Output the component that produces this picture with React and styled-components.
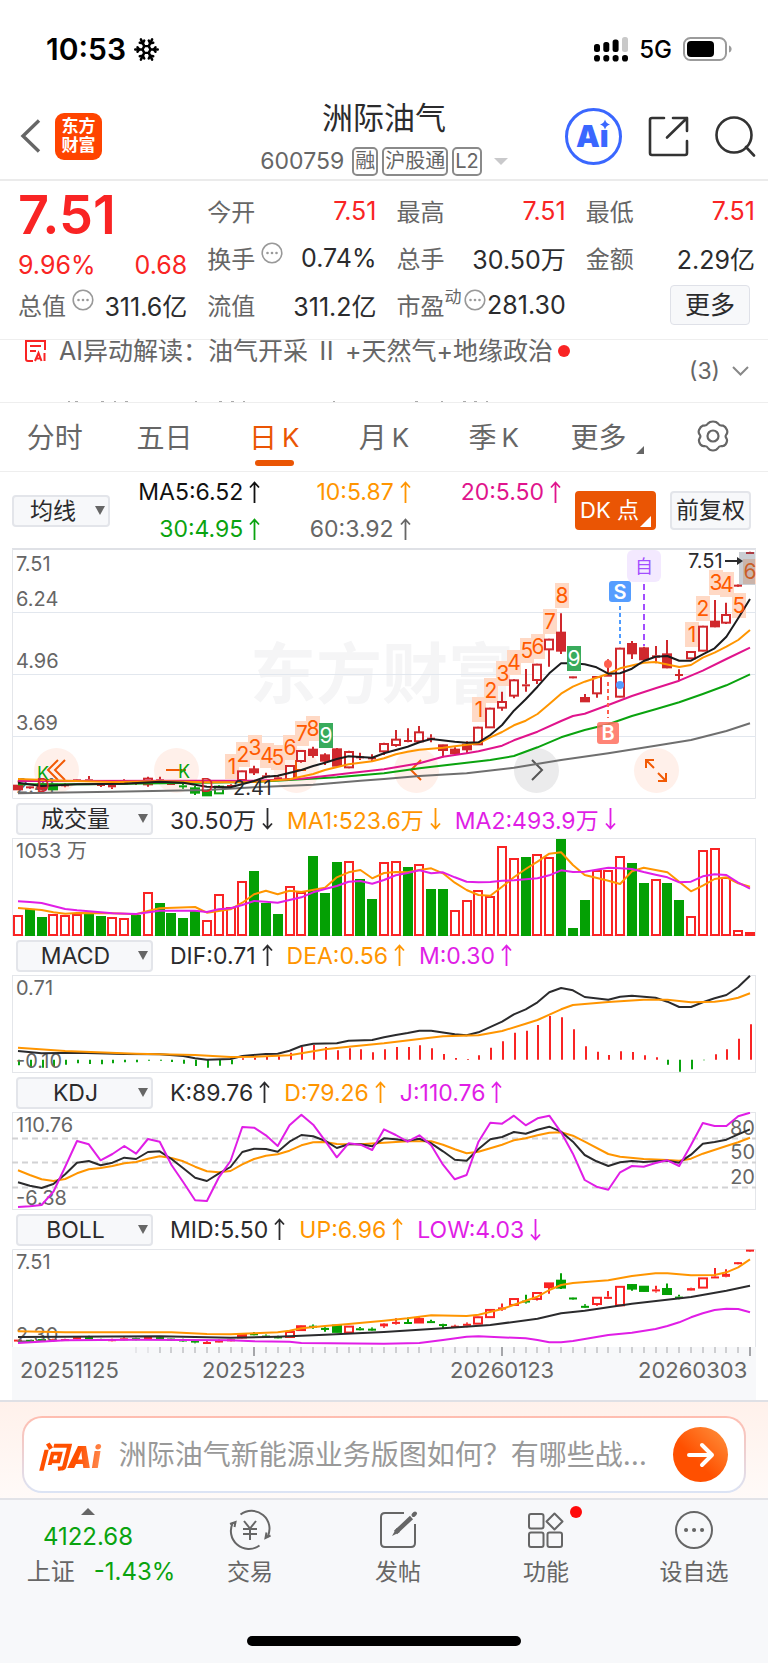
import React from "react";
import styled, { createGlobalStyle } from "styled-components";
import { Snowflake } from "lucide-react";

const RED = "#f92424";
const ORANGE = "#ea5504";
const AMBER = "#ff9500";
const GREEN = "#0aa30f";
const PINK = "#e0148c";
const VIOLET = "#e01ee6";
const INK = "#2b2b2d";
const GRAY = "#666";
const PALE = "#f7f8fa";
const LINE = "#e4e6ea";

const GlobalStyle = createGlobalStyle`
  * { box-sizing: border-box; }
  body {
    margin: 0;
    background: #fff;
    color: ${INK};
    font-family: Inter, "Noto Sans CJK SC", sans-serif;
  }
  button, select, input { font-family: inherit; color: inherit; margin: 0; }
  button { padding: 0; border: 0; background: none; }
  svg { display: block; flex: none; }
`;

/* ---------- chart data ---------- */

// [high, top, bottom, low] for each day, in thirds of a pixel from the page grid
const CANDLES = [
  [736, 737, 748, 749], [738, 739, 745, 747], [730, 733, 745, 750], [731, 734, 748, 749],
  [730, 733, 739, 742], [717, 718, 722, 723], [708, 718, 722, 723], [730, 732, 738, 741],
  [731, 734, 742, 747], [718, 727, 730, 733], [722, 726, 731, 735], [710, 716, 733, 740],
  [710, 718, 722, 723], [726, 729, 733, 734], [730, 736, 740, 746], [738, 745, 758, 765],
  [750, 756, 766, 768], [736, 740, 760, 762], [733, 735, 740, 741], [692, 694, 720, 726],
  [677, 688, 697, 705], [698, 706, 711, 715], [708, 712, 717, 720], [675, 678, 717, 720],
  [630, 633, 663, 668], [620, 629, 645, 653], [640, 646, 662, 675], [624, 628, 677, 680],
  [632, 636, 682, 685], [638, 649, 654, 660], [643, 652, 657, 664], [608, 612, 634, 645],
  [570, 599, 615, 620], [565, 600, 603, 607], [558, 577, 604, 607], [583, 593, 600, 607],
  [614, 616, 630, 652], [622, 629, 640, 645], [604, 614, 628, 640], [560, 563, 613, 615],
  [503, 506, 562, 564], [455, 486, 503, 512], [418, 421, 467, 475], [387, 433, 438, 455],
  [371, 374, 420, 432], [296, 299, 328, 380], [220, 278, 332, 342], [408, 409, 412, 413],
  [462, 474, 484, 485], [408, 411, 460, 473], [358, 404, 408, 410], [323, 326, 470, 472],
  [303, 312, 340, 357], [320, 325, 358, 362], [318, 346, 353, 370], [300, 343, 382, 385],
  [388, 402, 405, 423], [333, 336, 355, 357], [257, 260, 332, 334], [180, 245, 259, 262],
  [188, 225, 248, 252], [133, 134, 137, 138], [35, 36, 39, 40],
];

// top edge of every volume bar, and whether the day closed lower
const VOLUME = [
  346, 328, 350, 341, 345, 341, 341, 348, 350, 353, 345, 275, 309, 340, 353, 334,
  361, 282, 320, 243, 213, 309, 342, 258, 275, 168, 279, 185, 183, 237, 297, 187,
  184, 200, 193, 267, 267, 330, 299, 270, 288, 139, 174, 172, 163, 172, 117, 383,
  300, 209, 209, 169, 188, 250, 238, 248, 300, 348, 149, 143, 232, 390, 396,
];
const DOWN = new Set([
  1, 2, 6, 7, 10, 12, 13, 14, 15, 20, 21, 22, 25, 26, 27, 29, 30, 33, 35, 36, 43,
  46, 47, 48, 52, 53, 55, 56,
]);
const DULL = new Set([3, 14, 15, 16, 17]);

const MA = [
  ["#6f6f6f", [[0, 760], [8, 755], [16, 750], [20, 742], [25, 734], [29, 722], [31, 717], [34, 708], [38, 700], [42, 683], [46, 660], [50, 640], [54, 617], [57, 600], [60, 573], [62, 550]]],
  [GREEN, [[0, 733], [6, 733], [20, 726], [27, 712], [31, 700], [34, 685], [38, 668], [40, 660], [42, 648], [44, 622], [46, 592], [48, 570], [50, 553], [52, 528], [54, 508], [56, 487], [58, 462], [60, 436], [62, 403]]],
  [PINK, [[0, 723], [16, 722], [20, 722], [24, 716], [28, 700], [31, 688], [34, 670], [36, 650], [38, 640], [39, 634], [41, 617], [42, 601], [44, 575], [46, 543], [47, 528], [48, 521], [50, 495], [52, 468], [54, 445], [56, 422], [58, 392], [60, 357], [62, 323]]],
  [AMBER, [[0, 717], [4, 722], [8, 726], [12, 724], [16, 727], [20, 726], [23, 718], [25, 702], [26, 690], [28, 673], [30, 664], [31, 655], [32, 643], [33, 635], [34, 629], [36, 623], [39, 610], [40, 592], [41, 576], [42, 556], [43, 542], [44, 522], [45, 492], [46, 461], [47, 440], [48, 425], [50, 401], [51, 385], [53, 368], [54, 366], [56, 381], [57, 375], [58, 353], [59, 338], [60, 320], [61, 300], [62, 270]]],
  ["#1c1c1e", [[0, 728], [2, 738], [5, 733], [9, 731], [12, 725], [14, 728], [16, 740], [18, 742], [20, 723], [21, 710], [22, 707], [24, 690], [25, 678], [26, 668], [27, 657], [28, 649], [30, 653], [31, 640], [32, 630], [33, 620], [34, 607], [35, 597], [37, 605], [38, 608], [39, 607], [40, 585], [41, 555], [42, 512], [43, 478], [44, 440], [45, 400], [46, 370], [47, 370], [48, 373], [49, 382], [50, 401], [51, 400], [52, 386], [53, 363], [54, 350], [55, 348], [56, 362], [57, 362], [58, 343], [59, 325], [60, 290], [61, 235], [62, 177]]],
];

const VOLUME_MA = [
  [AMBER, [[0, 324], [1, 327], [2, 330], [3, 337], [4, 341], [5, 339], [8, 340], [10, 343], [11, 333], [12, 325], [15, 321], [16, 338], [17, 333], [18, 328], [19, 308], [20, 283], [21, 272], [22, 283], [23, 272], [24, 276], [26, 263], [27, 232], [28, 217], [29, 210], [30, 235], [31, 219], [32, 216], [33, 217], [34, 210], [35, 205], [36, 220], [37, 248], [38, 270], [39, 285], [40, 287], [41, 260], [42, 232], [43, 207], [44, 185], [45, 161], [46, 157], [47, 195], [48, 225], [50, 242], [51, 252], [52, 214], [53, 203], [55, 217], [56, 245], [57, 274], [58, 257], [59, 237], [60, 232], [61, 250], [62, 260]]],
  [VIOLET, [[0, 304], [1, 306], [2, 309], [3, 318], [4, 327], [5, 331], [8, 340], [10, 342], [12, 332], [15, 332], [16, 336], [17, 328], [18, 325], [19, 315], [20, 303], [21, 305], [22, 308], [23, 300], [24, 292], [25, 277], [26, 267], [27, 258], [28, 245], [29, 243], [30, 251], [31, 240], [32, 226], [33, 219], [34, 211], [35, 220], [36, 217], [37, 232], [38, 245], [39, 247], [40, 246], [41, 242], [42, 241], [43, 238], [44, 235], [45, 226], [46, 211], [47, 216], [48, 215], [49, 209], [50, 203], [51, 205], [52, 207], [53, 216], [54, 224], [55, 232], [56, 247], [57, 245], [58, 229], [59, 223], [60, 225], [61, 248], [62, 266]]],
];

const MACD_BARS = [
  796, 803, 803, 800, 794, 790, 792, 793, 790, 787, 787, 782, 782, 786, 791, 798,
  803, 797, 793, 775, 773, 770, 769, 758, 740, 735, 741, 751, 745, 748, 757, 748,
  741, 741, 736, 745, 762, 774, 777, 766, 743, 724, 698, 692, 675, 648, 652, 688,
  739, 755, 765, 754, 756, 766, 772, 794, 815, 808, 781, 763, 748, 716, 673,
];
const MACD_LINES = [
  [INK, [[0, 753], [2, 760], [5, 758], [9, 762], [12, 763], [14, 768], [15, 775], [16, 779], [18, 777], [19, 768], [21, 762], [22, 761], [23, 752], [24, 738], [25, 731], [27, 730], [28, 722], [30, 720], [31, 712], [32, 705], [33, 699], [34, 692], [35, 692], [37, 703], [38, 706], [39, 697], [41, 665], [42, 643], [43, 628], [44, 607], [45, 577], [46, 564], [47, 571], [48, 591], [50, 599], [51, 590], [52, 587], [54, 593], [55, 605], [56, 621], [57, 621], [58, 607], [59, 595], [60, 585], [61, 561], [62, 527]]],
  [AMBER, [[0, 743], [4, 753], [10, 761], [15, 765], [18, 771], [20, 770], [23, 766], [24, 760], [26, 748], [28, 740], [31, 730], [34, 717], [36, 709], [39, 706], [41, 693], [43, 671], [44, 660], [46, 628], [47, 615], [50, 606], [53, 599], [55, 599], [57, 607], [59, 605], [60, 601], [61, 593], [62, 580]]],
];

const daily = (values) => values.map((v, i) => [i, v]);
const KDJ_LINES = [
  [AMBER, [[0, 286], [1, 300], [2, 313], [3, 318], [4, 312], [5, 295], [6, 283], [7, 279], [8, 273], [9, 265], [10, 261], [11, 251], [12, 244], [13, 249], [14, 259], [15, 275], [16, 289], [17, 292], [18, 288], [19, 268], [20, 252], [21, 242], [22, 238], [23, 227], [24, 211], [25, 202], [26, 201], [27, 207], [29, 208], [31, 203], [33, 199], [35, 199], [36, 209], [37, 223], [38, 235], [39, 230], [41, 209], [42, 196], [43, 190], [44, 181], [45, 173], [46, 172], [47, 182], [48, 200], [50, 237], [51, 245], [53, 252], [55, 255], [56, 257], [57, 251], [58, 236], [60, 213], [61, 202], [62, 188]]],
  [INK, daily([322, 332, 339, 327, 298, 263, 258, 271, 263, 248, 252, 231, 229, 252, 280, 308, 318, 296, 276, 231, 221, 222, 230, 200, 180, 184, 197, 219, 208, 208, 214, 190, 193, 197, 191, 205, 229, 254, 257, 222, 193, 186, 171, 176, 164, 155, 170, 200, 240, 259, 273, 262, 258, 261, 259, 257, 263, 239, 206, 201, 194, 178, 163])],
  [VIOLET, daily([396, 394, 390, 350, 275, 198, 208, 256, 237, 213, 236, 192, 200, 270, 322, 376, 378, 308, 258, 156, 158, 181, 213, 151, 119, 149, 197, 247, 205, 209, 225, 163, 180, 200, 181, 211, 269, 313, 300, 200, 143, 146, 122, 151, 130, 122, 172, 236, 315, 335, 344, 292, 273, 275, 264, 256, 273, 210, 144, 153, 153, 124, 113])],
];

const BOLL_LINES = [
  [AMBER, [[0, 769], [4, 772], [13, 772], [16, 777], [18, 778], [20, 775], [22, 772], [23, 767], [24, 760], [26, 753], [28, 747], [31, 737], [33, 730], [35, 721], [38, 723], [39, 719], [41, 702], [43, 677], [44, 665], [45, 645], [46, 630], [47, 624], [50, 616], [52, 603], [54, 595], [55, 595], [57, 601], [59, 600], [60, 592], [61, 577], [62, 553]]],
  [INK, [[0, 786], [12, 784], [18, 788], [22, 785], [26, 779], [31, 771], [36, 760], [40, 750], [44, 731], [46, 715], [48, 707], [52, 686], [57, 666], [60, 647], [62, 632]]],
  [VIOLET, [[0, 804], [4, 796], [10, 794], [18, 796], [20, 799], [23, 800], [24, 804], [31, 806], [34, 804], [36, 795], [38, 785], [39, 784], [43, 790], [44, 795], [45, 802], [46, 802], [47, 798], [50, 780], [52, 773], [54, 762], [55, 753], [56, 742], [57, 727], [58, 715], [59, 705], [60, 701], [61, 702], [62, 712]]],
];

// nine-count markers: label, x and y of the centre
const COUNTS = [
  ["1", 220, 218], ["2", 231, 206], ["3", 243, 199], ["4", 255, 207], ["5", 266, 209],
  ["6", 278, 199], ["7", 290, 185], ["8", 301, 180], ["9", 314, 187],
  ["1", 467, 161], ["2", 479, 142], ["3", 491, 125], ["4", 502, 114], ["5", 515, 102],
  ["6", 526, 98], ["7", 538, 73], ["8", 550, 47], ["9", 562, 110],
  ["1", 680, 86], ["2", 691, 60], ["3", 704, 34], ["4", 715, 36], ["5", 727, 57], ["6", 738, 23],
];

/* ---------- chart pieces ---------- */

const dayX = (i) => 6 + (i * 732) / 62;
const scaleFrom = (origin) => (v) => (v - origin) / 3;

const PlotSvg = styled.svg`
  width: 100%;
  height: auto;
  position: relative;
  pointer-events: none;
`;
const Scale = styled.text`
  font-size: 20px;
  fill: ${(p) => p.$color || GRAY};
`;
const Count = styled.text`
  font-size: 21px;
  text-anchor: middle;
  fill: ${(p) => (p.$last ? "#fff" : "#ff5a00")};
`;
const PointMark = styled.text`
  font-size: ${(p) => p.$size || 18}px;
  font-weight: ${(p) => p.$weight || 400};
  text-anchor: middle;
  fill: ${(p) => p.$color};
`;
const Watermark = styled.text`
  font-size: 66px;
  font-weight: 700;
  fill: #f5f5f6;
`;

function Frame({ height }) {
  return <rect x="0.5" y="0.5" width="743" height={height - 1} fill="none" stroke={LINE} />;
}

function Lines({ series, y }) {
  return series.map(([color, points]) => (
    <polyline
      key={color}
      fill="none"
      stroke={color}
      strokeWidth="2"
      strokeLinejoin="round"
      points={points.map(([i, v]) => `${dayX(i).toFixed(1)},${y(v).toFixed(1)}`).join(" ")}
    />
  ));
}

function Candles({ y, color, filled, half }) {
  return CANDLES.map(([h, t, b, l], i) => {
    const x = Math.round(dayX(i));
    const c = color(i);
    const top = y(t);
    const height = Math.max(2, y(b) - top);
    return (
      <g key={i} stroke={c} strokeWidth="2">
        <path d={`M${x} ${y(h)}V${top}M${x} ${top + height}V${y(l)}`} />
        <rect
          x={x - half}
          y={top}
          width={half * 2}
          height={height}
          strokeWidth={height < 3 ? 0 : 2}
          fill={height < 5 || filled(i) ? c : "#fff"}
        />
      </g>
    );
  });
}

function PriceChart() {
  const y = scaleFrom(24);
  return (
    <PlotSvg viewBox="0 0 744 251" role="img" aria-label="日K 价格走势">
      <Watermark x="238" y="150">东方财富</Watermark>
      <path d="M0 1H744" stroke="#dfe1e6" strokeWidth="2" />
      <path d="M0.5 1V250.5H743.5V1" fill="none" stroke={LINE} />
      <path d="M0 64.5H744M0 126.5H744M0 188.5H744" stroke="#e2e7ee" />
      <Scale x="4" y="23">7.51</Scale>
      <Scale x="4" y="58">6.24</Scale>
      <Scale x="4" y="120">4.96</Scale>
      <Scale x="4" y="182">3.69</Scale>
      <Scale x="4" y="245">2.41</Scale>
      {COUNTS.map(([n, x, cy], i) => (
        <rect
          key={i}
          x={x - 7}
          y={cy - 12}
          width="14"
          height="25"
          fill={n === "9" ? "#39ab5c" : "#ffd9c5"}
        />
      ))}
      <Candles
        y={y}
        half={4}
        color={(i) => (DULL.has(i) ? GREEN : "#d0282d")}
        filled={(i) => DOWN.has(i)}
      />
      <Lines series={MA} y={y} />
      {COUNTS.filter(([n]) => n === "9").map(([n, x, cy]) => (
        <rect key={x} x={x - 7} y={cy - 12} width="14" height="25" fill="#39ab5c" />
      ))}
      {COUNTS.map(([n, x, cy], i) => (
        <Count key={i} x={x} y={cy + 8} $last={n === "9"}>{n}</Count>
      ))}
      <PointMark x="31" y="232" $color={GREEN}>K</PointMark>
      <PointMark x="31" y="244" $color="#d0282d">D</PointMark>
      <PointMark x="172" y="230" $color={GREEN}>K</PointMark>
      <PointMark x="195" y="244" $color="#d0282d">D</PointMark>
      <Scale x="221" y="247" $color={INK}>2.41</Scale>

      <rect x="727" y="4" width="16" height="33" fill="#5b6675" opacity="0.32" />
      <Scale x="676" y="20" $color={INK}>7.51</Scale>
      <path d="M713 13H726" stroke={INK} strokeWidth="2" />
      <path d="M725 9L731 13L725 17Z" fill={INK} />

      <rect x="615" y="2" width="34" height="32" rx="6" fill="#f3e9ff" />
      <PointMark x="632" y="25" $color="#a24dff">自</PointMark>
      <path d="M632 36V98" stroke="#a24dff" strokeWidth="2" strokeDasharray="6 4" />
      <rect x="597" y="33" width="22" height="21" rx="3" fill="#559dff" />
      <PointMark x="608" y="51" $size={20} $weight={600} $color="#fff">S</PointMark>
      <path d="M608 58V96" stroke="#4d9bff" strokeWidth="2" strokeDasharray="4 3" />
      <circle cx="608" cy="137" r="4" fill="#559dff" />
      <rect x="585" y="174" width="22" height="22" rx="3" fill="#ff6f5e" opacity="0.85" />
      <PointMark x="596" y="192" $size={20} $weight={600} $color="#fff">B</PointMark>
      <path d="M596 134V170" stroke="#ff5f4d" strokeWidth="2" strokeDasharray="4 3" />
      <circle cx="596" cy="116" r="4" fill="#ff5f4d" />
    </PlotSvg>
  );
}

function VolumeChart() {
  const y = scaleFrom(114);
  return (
    <PlotSvg viewBox="0 0 744 98" role="img" aria-label="成交量走势">
      <Frame height={98} />
      <Scale x="4" y="20">1053 万</Scale>
      {VOLUME.map((v, i) => {
        const down = DOWN.has(i);
        const inset = down ? 0 : 1;
        const top = Math.round(y(v));
        return (
          <rect
            key={i}
            x={Math.round(dayX(i)) - 5 + inset}
            y={top + inset}
            width={10 - inset * 2}
            height={Math.max(1, 98 - top - inset * 2)}
            fill={down ? "#04a004" : "#fff"}
            stroke={down ? "none" : RED}
            strokeWidth="2"
          />
        );
      })}
      <Lines series={VOLUME_MA} y={y} />
    </PlotSvg>
  );
}

function MacdChart() {
  const y = scaleFrom(525);
  return (
    <PlotSvg viewBox="0 0 744 98" role="img" aria-label="MACD 走势">
      <Frame height={98} />
      <Scale x="4" y="20">0.71</Scale>
      {MACD_BARS.map((v, i) => (
        <path
          key={i}
          d={`M${Math.round(dayX(i)) + 1} ${y(779)}V${y(v)}`}
          stroke={v > 779 ? GREEN : RED}
          strokeWidth="2"
        />
      ))}
      <Scale x="4" y="93">-0.10</Scale>
      <Lines series={MACD_LINES} y={y} />
    </PlotSvg>
  );
}

function KdjChart() {
  return (
    <PlotSvg viewBox="0 0 744 98" role="img" aria-label="KDJ 走势">
      <Frame height={98} />
      <path d="M0 26.5H744M0 50.5H744M0 75.5H744" stroke="#d2d2d4" strokeWidth="2" strokeDasharray="6 4" />
      <Scale x="4" y="20">110.76</Scale>
      <Scale x="4" y="93">-6.38</Scale>
      <Scale x="743" y="23" textAnchor="end">80</Scale>
      <Scale x="743" y="47" textAnchor="end">50</Scale>
      <Scale x="743" y="72" textAnchor="end">20</Scale>
      <Lines series={KDJ_LINES} y={scaleFrom(111)} />
    </PlotSvg>
  );
}

function BollChart() {
  const y = scaleFrom(522);
  return (
    <PlotSvg viewBox="0 0 744 98" role="img" aria-label="BOLL 走势">
      <path d="M0.5 98V0.5H743.5V98" fill="none" stroke={LINE} />
      <Scale x="4" y="20">7.51</Scale>
      <Candles
        y={(v) => y(510 + v * 0.385)}
        half={4}
        color={(i) => (DOWN.has(i) ? "#04a004" : RED)}
        filled={(i) => DOWN.has(i)}
      />
      <Scale x="4" y="93">2.30</Scale>
      <Lines series={BOLL_LINES} y={y} />
    </PlotSvg>
  );
}

const AXIS_DAYS = Array.from({ length: 53 }, (_, k) => k + 10);
const AXIS_MONTHS = [20, 41, 62];

const AxisSvg = styled(PlotSvg)`
  background: ${PALE};
`;
const AxisDate = styled.text`
  font-size: 22px;
  fill: ${GRAY};
`;

function DateAxis() {
  return (
    <AxisSvg viewBox="0 0 744 53" role="img" aria-label="日期">
      {AXIS_DAYS.map((i) => (
        <path
          key={i}
          d={`M${Math.round(dayX(i))} 0V${AXIS_MONTHS.includes(i) ? 9 : 6}`}
          stroke="#a5a6aa"
          strokeWidth={AXIS_MONTHS.includes(i) ? 2 : 1}
          opacity={i < 12 ? 0.4 : 1}
        />
      ))}
      <AxisDate x="8" y="31">20251125</AxisDate>
      <AxisDate x="190" y="31">20251223</AxisDate>
      <AxisDate x="438" y="31">20260123</AxisDate>
      <AxisDate x="626" y="31">20260303</AxisDate>
    </AxisSvg>
  );
}

/* ---------- status bar and header ---------- */

const StatusBar = styled.div`
  display: flex;
  align-items: center;
  justify-content: space-between;
  height: 95px;
  padding: 3px 36px 0 46px;
  color: #000;
`;
const StatusGroup = styled.div`
  display: flex;
  align-items: center;
  gap: ${(p) => p.$gap}px;
  font-size: ${(p) => p.$size}px;
  font-weight: ${(p) => p.$weight};
`;

function Signal() {
  return (
    <svg width="34" height="25" viewBox="0 0 34 25">
      <rect x="0" y="7" width="6" height="8" rx="2.5" />
      <rect x="9.3" y="5" width="6" height="10" rx="2.5" />
      <rect x="18.6" y="2.5" width="6" height="12.5" rx="2.5" />
      <rect x="28" y="0" width="6" height="15" rx="2.5" fill="#c9c9c9" />
      {[0, 9.3, 18.6, 28].map((x) => (
        <rect key={x} x={x} y="18" width="6" height="6.5" rx="2.8" />
      ))}
    </svg>
  );
}

function Battery() {
  return (
    <svg width="49" height="24" viewBox="0 0 49 24">
      <rect x="1" y="1" width="42" height="22" rx="6.5" fill="none" stroke="#9b9b9b" strokeWidth="2" />
      <rect x="4" y="4" width="27" height="16" rx="4" />
      <path d="M46 8.5C49.5 9.5 49.5 14.5 46 15.5Z" fill="#9b9b9b" />
    </svg>
  );
}

const Header = styled.header`
  display: grid;
  grid-template-columns: 1fr auto 1fr;
  align-items: center;
  height: 86px;
  padding: 0 12px 2px;
  border-bottom: 2px solid #ebebeb;
`;
const HeaderSide = styled.div`
  display: flex;
  align-items: center;
  justify-content: ${(p) => (p.$end ? "flex-end" : "flex-start")};
  gap: ${(p) => (p.$end ? 26 : 14)}px;
  padding-left: 8px;
`;
const AppLogo = styled.span`
  display: grid;
  place-content: center;
  width: 47px;
  height: 47px;
  border-radius: 9px;
  background: #ff4400;
  color: #fff;
  font-size: 17px;
  font-weight: 700;
  line-height: 19px;
  text-align: center;
`;
const Title = styled.h1`
  margin: 0;
  font-size: 31px;
  font-weight: 400;
  line-height: 42px;
  text-align: center;
`;
const Subtitle = styled.div`
  display: flex;
  align-items: center;
  justify-content: center;
  gap: 4px;
  height: 36px;
  padding-top: 8px;
  font-size: 23px;
  color: ${GRAY};
`;
const Code = styled.span`
  margin-right: 4px;
`;
const Tag = styled.span`
  height: 29px;
  padding: 0 1px;
  border: 2px solid #8a8a8a;
  border-radius: 5px;
  font-size: 20px;
  line-height: 25px;
`;
const Caret = styled.span`
  margin-left: 8px;
  border: 7px solid transparent;
  border-top-color: #c9c9cb;
  border-bottom: 0;
`;
const AiText = styled.text`
  font-size: 30px;
  font-weight: 900;
  fill: #3a67ff;
`;

function BackIcon() {
  return (
    <svg width="21" height="34" viewBox="0 0 21 34" fill="none" stroke="#666" strokeWidth="3.4">
      <path d="M19 1.5L3 17L19 32.5" />
    </svg>
  );
}

function AiIcon() {
  return (
    <svg width="57" height="57" viewBox="0 0 57 57">
      <circle cx="28.5" cy="28.5" r="27" fill="none" stroke="#3a67ff" strokeWidth="3" />
      <AiText x="11" y="39">Aı</AiText>
      <path d="M40 11.5Q41 15.5 45 16.5Q41 17.5 40 21.5Q39 17.5 35 16.5Q39 15.5 40 11.5Z" fill="#3a67ff" />
    </svg>
  );
}

function ShareIcon() {
  return (
    <svg width="41" height="41" viewBox="0 0 41 41" fill="none" stroke="#333" strokeWidth="2.6" strokeLinecap="round" strokeLinejoin="round">
      <path d="M16 2H4Q2 2 2 4V37Q2 39 4 39H37Q39 39 39 37V25" />
      <path d="M25 2H39V15M39 2L19 21.5" />
    </svg>
  );
}

function SearchIcon() {
  return (
    <svg width="41" height="41" viewBox="0 0 41 41" fill="none" stroke="#333" strokeWidth="2.6" strokeLinecap="round">
      <circle cx="19" cy="19" r="17.5" />
      <path d="M31 31L39 39.5" />
    </svg>
  );
}

/* ---------- quote ---------- */

const Quote = styled.section`
  display: grid;
  grid-template-columns: repeat(4, 1fr);
  column-gap: 20px;
  padding: 6px 13px 11px 18px;
`;
const QuoteColumn = styled.div`
  display: grid;
  grid-template-rows: 47px 47px 47px;
`;
const Price = styled.strong`
  align-self: center;
  padding-top: 8px;
  font-size: 54px;
  font-weight: 600;
  line-height: 48px;
  color: ${RED};
`;
const Figure = styled.div`
  display: flex;
  align-items: center;
  justify-content: ${(p) => (p.$change ? "space-between" : "flex-start")};
  padding-top: ${(p) => (p.$change ? 14 : 0)}px;
  white-space: nowrap;
  font-size: 25px;
`;
const Label = styled.span`
  font-size: 24px;
  color: ${GRAY};
`;
const Super = styled.sup`
  align-self: flex-start;
  font-size: 17px;
  line-height: 32px;
  color: ${GRAY};
`;
const Value = styled.span`
  color: ${(p) => (p.$up ? RED : INK)};
  ${Label} ~ & { margin-left: auto; }
`;
const MoreButton = styled.button`
  justify-self: end;
  align-self: center;
  width: 80px;
  height: 40px;
  margin-right: 5px;
  border: 1px solid #dfe1e8;
  border-radius: 4px;
  background: ${PALE};
  font-size: 25px;
  line-height: 36px;
`;
const InfoButton = styled.button`
  align-self: flex-start;
  margin: 8px 0 0 ${(p) => (p.$tight ? 2 : 6)}px;
`;

function Info({ tight, label }) {
  return (
    <InfoButton aria-label={label} $tight={tight}>
      <svg width="22" height="22" viewBox="0 0 22 22" fill="#999">
        <circle cx="11" cy="11" r="9.8" fill="none" stroke="#999" strokeWidth="1.6" />
        <circle cx="6.5" cy="11" r="1.3" />
        <circle cx="11" cy="11" r="1.3" />
        <circle cx="15.5" cy="11" r="1.3" />
      </svg>
    </InfoButton>
  );
}

/* ---------- news ---------- */

const News = styled.section`
  display: flex;
  justify-content: space-between;
  align-items: stretch;
  height: 64px;
  padding: 0 19px 0 25px;
  border-top: 1px solid #eee;
  border-bottom: 1px solid #eee;
  font-size: 25px;
  color: ${GRAY};
`;
const NewsText = styled.div`
  display: flex;
  flex-direction: column;
  justify-content: space-between;
`;
const Headline = styled.a`
  display: flex;
  align-items: center;
  height: 22px;
  color: inherit;
  text-decoration: none;
  white-space: nowrap;
`;
const HeadlineText = styled.span`
  margin: 0 5px 0 13px;
  padding-bottom: 4px;
`;
const Numeral = styled.span`
  margin: 0 6px;
  font-family: "Noto Sans CJK SC", sans-serif;
  line-height: 1;
`;
const Dot = styled.i`
  width: 12px;
  height: 12px;
  border-radius: 50%;
  background: ${RED};
`;
const NewsCount = styled.button`
  display: flex;
  align-items: center;
  gap: 12px;
  font-size: 23px;
  color: ${GRAY};
`;

/* ---------- period tabs ---------- */

const Tabs = styled.nav`
  display: flex;
  height: 69px;
  border-bottom: 1px solid #eee;
`;
const Tab = styled.button`
  flex: 1;
  display: flex;
  flex-direction: column;
  align-items: center;
  justify-content: flex-end;
  gap: 2px;
  padding-bottom: 5px;
  font-size: 28px;
  line-height: 40px;
  color: ${(p) => (p.$active ? ORANGE : GRAY)};
  &::after {
    content: "";
    width: 39px;
    height: 6px;
    border-radius: 3px;
    background: ${(p) => (p.$active ? ORANGE : "transparent")};
  }
`;
const TabName = styled.span`
  display: flex;
  align-items: flex-end;
  gap: ${(p) => (p.$menu ? 10 : 5)}px;
  height: 40px;
  padding-left: ${(p) => (p.$menu ? 8 : 0)}px;
`;
const Latin = styled.span`
  font-size: 26px;
`;
const Corner = styled.i`
  width: 0;
  height: 0;
  margin-bottom: ${(p) => p.$up || 0}px;
  border-left: ${(p) => p.$size}px solid transparent;
  border-bottom: ${(p) => p.$size}px solid ${(p) => p.$color};
`;

/* ---------- indicators ---------- */

const MaBar = styled.div`
  display: flex;
  align-items: center;
  gap: 14px;
  height: 76px;
  padding: 1px 17px 0 12px;
`;
const MaValues = styled.div`
  flex: 1;
  display: grid;
  grid-template-columns: repeat(3, 1fr);
  grid-auto-rows: 37px;
  margin-left: -14px;
`;
const Reading = styled.span`
  display: flex;
  align-items: center;
  justify-content: flex-end;
  gap: 6px;
  font-size: 23px;
  white-space: nowrap;
  color: ${(p) => p.$color};
`;
const PickerBox = styled.span`
  position: relative;
  flex: none;
  width: ${(p) => p.$width}px;
  &::after {
    content: "";
    position: absolute;
    right: 5px;
    top: 11px;
    border: 5px solid transparent;
    border-top: 9px solid #666;
    border-bottom: 0;
    pointer-events: none;
  }
`;
const Picker = styled.select`
  appearance: none;
  display: block;
  width: 100%;
  height: 32px;
  padding: 0 ${(p) => p.$pad}px 0 0;
  border: 2px solid #e3e5ea;
  border-radius: 4px;
  background: ${PALE};
  font-size: 23px;
  line-height: 28px;
  text-align: center;
  text-align-last: center;
`;
const PillButton = styled.button`
  display: flex;
  align-items: center;
  justify-content: center;
  position: relative;
  flex: none;
  width: 81px;
  height: 39px;
  border-radius: 4px;
  border: 2px solid ${(p) => (p.$hot ? ORANGE : "#e3e5ea")};
  background: ${(p) => (p.$hot ? ORANGE : PALE)};
  color: ${(p) => (p.$hot ? "#fff" : INK)};
  font-size: ${(p) => (p.$hot ? 22 : 23)}px;
  line-height: 32px;
  padding: 0 ${(p) => (p.$hot ? 12 : 0)}px 2px 0;
  white-space: nowrap;
`;
const PillCorner = styled(Corner)`
  position: absolute;
  right: 3px;
  bottom: 1px;
`;
const Charts = styled.main`
  padding: 0 12px;
`;
const IndicatorBar = styled.div`
  display: flex;
  align-items: center;
  gap: 14px;
  height: 39px;
  padding-left: 4px;
  ${Reading}:nth-child(2) { margin-left: 3px; }
`;
const PriceBox = styled.div`
  position: relative;
`;
const ChartControls = styled.div`
  position: absolute;
  left: 22px;
  bottom: 6px;
  display: flex;
  gap: 75px;
`;
const RoundButton = styled.button`
  display: grid;
  place-items: center;
  width: 45px;
  height: 45px;
  border-radius: 50%;
  background: ${(p) => (p.$muted ? "#ebebec" : "#fff0ea")};
  color: ${(p) => (p.$muted ? "#555" : "#f25a05")};
`;

function Arrow({ down }) {
  return (
    <svg width="11" height="23" viewBox="0 0 11 23" fill="none" stroke="currentColor" strokeWidth="1.8">
      <path d={down ? "M5.5 1V21M1 16.5L5.5 21.5L10 16.5" : "M5.5 22V2M1 6.5L5.5 1.5L10 6.5"} />
    </svg>
  );
}

function Reader({ color, down, children }) {
  return (
    <Reading $color={color}>
      {children}
      <Arrow down={down} />
    </Reading>
  );
}

function IndicatorPicker({ label, value, width, pad }) {
  return (
    <PickerBox $width={width}>
      <Picker aria-label={label} defaultValue={value} $pad={pad}>
        <option>{value}</option>
      </Picker>
    </PickerBox>
  );
}

const CONTROLS = [
  ["快退", "M24 12L14 22L24 32M31 12L21 22L31 32"],
  ["缩小", "M12 22H32"],
  ["放大", "M12 22H32M22 12V32"],
  ["左移", "M27 12L17 22L27 32"],
  ["右移", "M18 12L28 22L18 32"],
  ["全屏", "M12 20V12H20M12 12L20 20M32 25V33H24M32 33L24 25"],
];

const INDICATORS = [
  {
    name: "成交量",
    Chart: VolumeChart,
    readings: [["30.50万", INK, true], ["MA1:523.6万", AMBER, true], ["MA2:493.9万", VIOLET, true]],
  },
  {
    name: "MACD",
    Chart: MacdChart,
    readings: [["DIF:0.71", INK], ["DEA:0.56", AMBER], ["M:0.30", VIOLET]],
  },
  {
    name: "KDJ",
    Chart: KdjChart,
    readings: [["K:89.76", INK], ["D:79.26", AMBER], ["J:110.76", VIOLET]],
  },
  {
    name: "BOLL",
    Chart: BollChart,
    readings: [["MID:5.50", INK], ["UP:6.96", AMBER], ["LOW:4.03", VIOLET, true]],
  },
];

/* ---------- ask bar ---------- */

const AskBar = styled.div`
  padding: 14px 22px 5px;
  border-top: 2px solid #dfe0e5;
  background: linear-gradient(#fff1eb, #fffaf8);
`;
const AskBox = styled.form`
  display: flex;
  align-items: center;
  gap: 16px;
  height: 77px;
  padding: 0 16px 0 14px;
  border: 2px solid transparent;
  border-radius: 20px;
  background:
    linear-gradient(#fff, #fff) padding-box,
    linear-gradient(#ffbdb0, #dbe4f5) border-box;
`;
const AskLogo = styled.span`
  padding-right: 2px;
  font-size: 30px;
  font-style: italic;
  font-weight: 900;
  background: linear-gradient(100deg, #ff5000 60%, #ff9560);
  background-clip: text;
  color: transparent;
`;
const AskInput = styled.input`
  flex: 1;
  min-width: 0;
  padding: 0;
  border: 0;
  background: none;
  font-size: 28px;
  text-overflow: ellipsis;
  &::placeholder { color: #999; opacity: 1; }
`;
const SendButton = styled.button`
  display: grid;
  place-items: center;
  flex: none;
  width: 55px;
  height: 55px;
  border-radius: 50%;
  background: linear-gradient(225deg, #ff9440, #ff5000 60%);
`;

/* ---------- bottom navigation ---------- */

const BottomBar = styled.footer`
  border-top: 2px solid #e2e3e8;
  background: ${PALE};
`;
const NavRow = styled.nav`
  display: grid;
  grid-template-columns: 176fr repeat(4, 148fr);
`;
const NavItem = styled.button`
  display: flex;
  flex-direction: column;
  align-items: center;
  padding-top: 10px;
  gap: 8px;
  font-size: 23px;
  line-height: 28px;
  color: ${GRAY};
`;
const NavIcon = styled.span`
  position: relative;
`;
const Badge = styled.i`
  position: absolute;
  right: -16px;
  top: -4px;
  width: 12px;
  height: 12px;
  border-radius: 50%;
  background: #ff0a0a;
`;
const IndexItem = styled(NavItem)`
  gap: 7px;
  padding: 8px 0 0;
  color: ${GREEN};
  font-size: 24px;
  &::before {
    content: "";
    margin-bottom: 1px;
    border: 7px solid transparent;
    border-bottom: 7px solid #666;
    border-top: 0;
  }
`;
const IndexRow = styled.span`
  display: flex;
  gap: 19px;
  padding-left: 26px;
  white-space: nowrap;
`;
const HomeBar = styled.div`
  padding: 50px 0 17px;
  &::after {
    content: "";
    display: block;
    width: 274px;
    height: 10px;
    margin: 0 auto;
    border-radius: 5px;
    background: #000;
  }
`;

const NAV = [
  {
    name: "交易",
    icon: (
      <>
        <path d="M10.5 4.5A18 18 0 0 1 37.5 27M29.5 35.5A18 18 0 0 1 3 12.5" />
        <path d="M0 14L5.5 12L4.5 17M40.5 25.5L35.5 28L36.5 22.5" />
        <path d="M14 11L20 18.5L26 11M20 18.5V30M13 19H27M13 24H27" />
      </>
    ),
  },
  {
    name: "发帖",
    icon: (
      <>
        <path d="M26 3H7Q3 3 3 7V33Q3 37 7 37H33Q37 37 37 33V14" />
        <path d="M33.5 7.5L17.5 22.5" strokeWidth="4.5" />
        <path d="M18.5 18L14 26L22 22Z" fill="#666" stroke="none" />
        <path d="M35.5 5L37 3.5" strokeWidth="4" strokeLinecap="round" />
      </>
    ),
  },
  {
    name: "功能",
    badge: true,
    icon: (
      <>
        <rect x="3" y="4" width="14.5" height="14.5" rx="2" />
        <rect x="3" y="22.5" width="14.5" height="14.5" rx="2" />
        <rect x="21.5" y="22.5" width="14.5" height="14.5" rx="2" />
        <path d="M28.5 3.5L36.5 11.5L28.5 19.5L20.5 11.5Z" strokeLinejoin="round" />
      </>
    ),
  },
  {
    name: "设自选",
    icon: (
      <>
        <circle cx="20" cy="20" r="18" />
        <path d="M12 20H12.1M20 20H20.1M28 20H28.1" strokeWidth="4" strokeLinecap="round" />
      </>
    ),
  },
];

export default function App() {
  return (
    <>
      <GlobalStyle />
      <StatusBar>
        <StatusGroup $size={30} $weight={600} $gap={7}>
          10:53
          <Snowflake size={27} strokeWidth={2.2} />
        </StatusGroup>
        <StatusGroup $size={24} $weight={500} $gap={11}>
          <Signal />
          5G
          <Battery />
        </StatusGroup>
      </StatusBar>

      <Header>
        <HeaderSide>
          <button aria-label="返回"><BackIcon /></button>
          <AppLogo>东方<br />财富</AppLogo>
        </HeaderSide>
        <div>
          <Title>洲际油气</Title>
          <Subtitle>
            <Code>600759</Code>
            <Tag>融</Tag>
            <Tag>沪股通</Tag>
            <Tag>L2</Tag>
            <Caret />
          </Subtitle>
        </div>
        <HeaderSide $end>
          <button aria-label="AI"><AiIcon /></button>
          <button aria-label="分享"><ShareIcon /></button>
          <button aria-label="搜索"><SearchIcon /></button>
        </HeaderSide>
      </Header>

      <Quote>
        <QuoteColumn>
          <Price>7.51</Price>
          <Figure $change>
            <Value $up>9.96%</Value>
            <Value $up>0.68</Value>
          </Figure>
          <Figure>
            <Label>总值</Label>
            <Info label="总值说明" />
            <Value>311.6亿</Value>
          </Figure>
        </QuoteColumn>
        <QuoteColumn>
          <Figure><Label>今开</Label><Value $up>7.51</Value></Figure>
          <Figure>
            <Label>换手</Label>
            <Info label="换手说明" />
            <Value>0.74%</Value>
          </Figure>
          <Figure><Label>流值</Label><Value>311.2亿</Value></Figure>
        </QuoteColumn>
        <QuoteColumn>
          <Figure><Label>最高</Label><Value $up>7.51</Value></Figure>
          <Figure><Label>总手</Label><Value>30.50万</Value></Figure>
          <Figure>
            <Label>市盈</Label>
            <Super>动</Super>
            <Info tight label="市盈说明" />
            <Value>281.30</Value>
          </Figure>
        </QuoteColumn>
        <QuoteColumn>
          <Figure><Label>最低</Label><Value $up>7.51</Value></Figure>
          <Figure><Label>金额</Label><Value>2.29亿</Value></Figure>
          <MoreButton>更多</MoreButton>
        </QuoteColumn>
      </Quote>

      <News>
        <NewsText>
          <Headline href="#news">
            <svg width="21" height="22" viewBox="0 0 21 22" fill="none" stroke={RED} strokeWidth="2">
              <path d="M8 21H3Q1 21 1 19V1H20V10M5 6H16M5 11H11" />
              <path d="M10 21L13.5 13L16.5 21M11.5 18.5H15.5M19.5 13V21" />
            </svg>
            <HeadlineText>
              AI异动解读：油气开采<Numeral>Ⅱ</Numeral>+天然气+地缘政治
            </HeadlineText>
            <Dot />
          </Headline>
          <svg width="480" height="2" viewBox="0 0 480 2" aria-hidden="true">
            <path
              d="M43 1.5h2M50 1.5h3M76 1.5h3M89 1.5h2M100 1.5h3M170 1.5h2M194 1.5h3M206 1.5h3M218 1.5h2M308 1.5h2M390 1.5h3M416 1.5h2M438 1.5h3M449 1.5h3M461 1.5h2"
              stroke="#aaa"
            />
          </svg>
        </NewsText>
        <NewsCount>
          (3)
          <svg width="17" height="10" viewBox="0 0 17 10" fill="none" stroke="#888" strokeWidth="2">
            <path d="M1 1L8.5 8.5L16 1" />
          </svg>
        </NewsCount>
      </News>

      <Tabs>
        <Tab>分时</Tab>
        <Tab>五日</Tab>
        <Tab $active><TabName>日<Latin>K</Latin></TabName></Tab>
        <Tab><TabName>月<Latin>K</Latin></TabName></Tab>
        <Tab><TabName>季<Latin>K</Latin></TabName></Tab>
        <Tab>
          <TabName $menu>更多<Corner $size={8} $up={4} $color={GRAY} /></TabName>
        </Tab>
        <Tab aria-label="设置">
          <svg width="32" height="40" viewBox="0 0 32 40" fill="none" stroke="#666" strokeWidth="2.2" strokeLinejoin="round">
            <path d="M11 5.5Q12.5 3.5 16 3.5T21 5.5Q22.5 8 26 7.5Q28.5 8.5 30 12Q31 15 29 17Q28 18.5 29.5 20.5Q31 23 28.5 26.5Q27 28.5 24.5 28Q22 28 21 30Q19.5 32.5 16 32.5T11 30Q10 28 7.5 28Q5 28.5 3.5 26.5Q1 23 2.5 20.5Q4 18.5 3 17Q1 15 2 12Q3.5 8.5 6 7.5Q9.5 8 11 5.5Z" />
            <circle cx="16" cy="18" r="5.5" />
          </svg>
        </Tab>
      </Tabs>

      <MaBar>
        <IndicatorPicker label="主图指标" value="均线" width={98} pad={16} />
        <MaValues>
          <Reader color="#111">MA5:6.52</Reader>
          <Reader color={AMBER}>10:5.87</Reader>
          <Reader color={PINK}>20:5.50</Reader>
          <Reader color={GREEN}>30:4.95</Reader>
          <Reader color={GRAY}>60:3.92</Reader>
        </MaValues>
        <PillButton $hot>
          DK 点
          <PillCorner $size={11} $color="#fff" />
        </PillButton>
        <PillButton>前复权</PillButton>
      </MaBar>

      <Charts>
        <PriceBox>
          <ChartControls>
            {CONTROLS.map(([label, d]) => (
              <RoundButton key={label} aria-label={label} $muted={label === "右移"}>
                <svg width="45" height="45" viewBox="0 0 45 45" fill="none" stroke="currentColor" strokeWidth="2">
                  <path d={d} />
                </svg>
              </RoundButton>
            ))}
          </ChartControls>
          <PriceChart />
        </PriceBox>
        {INDICATORS.map(({ name, Chart, readings }) => (
          <section key={name}>
            <IndicatorBar>
              <IndicatorPicker label={`${name}指标`} value={name} width={137} pad={18} />
              {readings.map(([text, color, down]) => (
                <Reader key={text} color={color} down={down}>{text}</Reader>
              ))}
            </IndicatorBar>
            <Chart />
          </section>
        ))}
        <DateAxis />
      </Charts>

      <AskBar>
        <AskBox>
          <AskLogo>问Ai</AskLogo>
          <AskInput aria-label="提问" placeholder="洲际油气新能源业务版图如何？有哪些战…" />
          <SendButton type="button" aria-label="发送">
            <svg width="30" height="28" viewBox="0 0 30 28" fill="none" stroke="#fff" strokeWidth="4" strokeLinecap="round" strokeLinejoin="round">
              <path d="M3 14H26M16 4L26 14L16 24" />
            </svg>
          </SendButton>
        </AskBox>
      </AskBar>

      <BottomBar>
        <NavRow>
          <IndexItem>
            4122.68
            <IndexRow>
              <Label>上证</Label>
              -1.43%
            </IndexRow>
          </IndexItem>
          {NAV.map(({ name, icon, badge }) => (
            <NavItem key={name}>
              <NavIcon>
                <svg width="40" height="40" viewBox="0 0 40 40" fill="none" stroke="#666" strokeWidth="2" overflow="visible">
                  {icon}
                </svg>
                {badge && <Badge />}
              </NavIcon>
              {name}
            </NavItem>
          ))}
        </NavRow>
        <HomeBar />
      </BottomBar>
    </>
  );
}
